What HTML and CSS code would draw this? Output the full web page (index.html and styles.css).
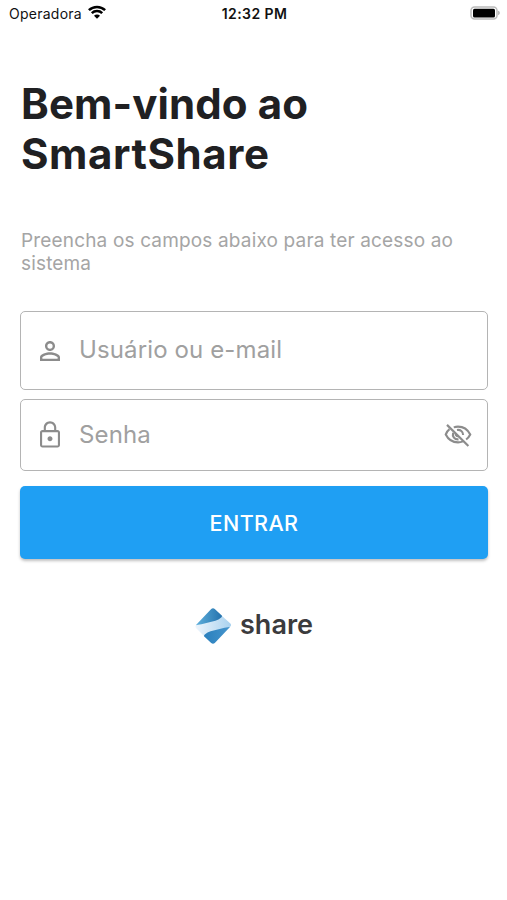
FILE: index.html
```html
<!DOCTYPE html>
<html lang="pt-BR">
<head>
    <meta charset="UTF-8">
    <meta name="viewport" content="width=device-width, initial-scale=1.0">
    <title>SmartShare</title>
    <link rel="stylesheet" href="styles.css">
</head>
<body>
    <header class="status-bar">
        <div class="carrier">
            <span class="carrier-name">Operadora</span>
            <svg class="wifi" viewBox="0 0 18 14">
                <path d="M.9 5.2a11.6 11.6 0 0 1 16.2 0" />
                <path d="M3.8 8.1a7.4 7.4 0 0 1 10.4 0" />
                <path class="wifi-dot" d="M9 13.8 6 10.8a4.2 4.2 0 0 1 6 0z" />
            </svg>
        </div>
        <span class="clock">12:32 PM</span>
        <svg class="battery" viewBox="0 0 30 14">
            <rect class="battery-case" x="1" y="1" width="26" height="12" rx="3.5" />
            <rect x="3" y="2.8" width="22" height="8.6" rx="1.5" />
            <path class="battery-tip" d="M28.2 4.8c2 .6 2 3.8 0 4.4z" />
        </svg>
    </header>

    <main class="login">
        <h1>Bem-vindo ao<br><span class="app-name">SmartShare</span></h1>
        <p class="subtitle">Preencha os campos abaixo para ter acesso ao<br>sistema</p>

        <form class="login-form">
            <label class="field field-user">
                <svg class="icon" viewBox="0 0 24 24">
                    <path d="M12 5.9a2.1 2.1 0 1 1 0 4.2 2.1 2.1 0 0 1 0-4.2m0 9c2.97 0 6.1 1.46 6.1 2.1v1.1H5.9V17c0-.64 3.13-2.1 6.1-2.1M12 4C9.79 4 8 5.79 8 8s1.79 4 4 4 4-1.79 4-4-1.79-4-4-4zm0 9c-2.67 0-8 1.34-8 4v3h16v-3c0-2.66-5.33-4-8-4z" />
                </svg>
                <input type="text" placeholder="Usuário ou e-mail">
            </label>
            <label class="field field-password">
                <svg class="icon" viewBox="0 0 24 24">
                    <path d="M18 8h-1V6c0-2.76-2.24-5-5-5S7 3.24 7 6v2H6c-1.1 0-2 .9-2 2v10c0 1.1.9 2 2 2h12c1.1 0 2-.9 2-2V10c0-1.1-.9-2-2-2zM8.7 6c0-1.8 1.5-3.3 3.3-3.3s3.3 1.5 3.3 3.3v2H8.7V6zM18.3 20.3H5.7V9.7h12.6v10.6zM12 17c1.1 0 2-.9 2-2s-.9-2-2-2-2 .9-2 2 .9 2 2 2z" />
                </svg>
                <input type="password" placeholder="Senha">
                <svg class="icon icon-eye" viewBox="0 0 24 24">
                    <path d="M8.6 5.9C9.7 5.5 10.8 5.3 12 5.3c4.2 0 7.8 2.4 9.8 6.3-.8 1.6-1.9 3-3.3 4" />
                    <path d="M5.2 7.3c-1.3 1-2.3 2.5-3 4.3 2 4 5.6 6.3 9.8 6.3 1.4 0 2.8-.3 4-.8" />
                    <path d="M11.2 8c2.7-.5 4.9 1.4 4.9 4" />
                    <path d="M8.1 10.3c-.9 2.9 1.2 5.5 4.3 5.2" />
                    <path d="M10.3 10.4c-.5 1.2.3 2.6 1.8 2.6" />
                    <path d="M3.2 3.9 20.3 20.8" />
                </svg>
            </label>
            <button type="button" class="btn-enter">ENTRAR</button>
        </form>

        <div class="brand">
            <svg class="brand-logo" viewBox="0 0 36 38">
                <defs>
                    <linearGradient id="top" x1="0" y1="0" x2="1" y2="0">
                        <stop offset="0" stop-color="#5fb0dc" />
                        <stop offset="1" stop-color="#2472ad" />
                    </linearGradient>
                    <linearGradient id="band" x1="0" y1="0" x2="1" y2="0">
                        <stop offset="0" stop-color="#eef5fc" />
                        <stop offset="1" stop-color="#a9d2ef" />
                    </linearGradient>
                    <linearGradient id="bottom" x1="0" y1="0" x2="1" y2="0">
                        <stop offset="0" stop-color="#2b80bd" />
                        <stop offset="1" stop-color="#4595cd" />
                    </linearGradient>
                </defs>
                <path fill="url(#band)" d="M.6 18.6 9 14l17.5-5.5 8.9 8q1.4 1.5 0 3L27 24 9.5 29.5 1 21q-1-1-.4-2.4z" />
                <path fill="url(#top)" d="M.8 18.2 16.2 2q1.8-1.6 3.6 0l7.2 6.8q.4 2.2-6.6 5L6.4 17.2q-3.8.4-5.6 1z" />
                <path fill="url(#bottom)" d="M35.2 19.8 19.8 36q-1.8 1.6-3.6 0L9 29.2q-.4-2.2 6.6-5l14-3.4q3.8-.4 5.6-1z" />
            </svg>
            <span class="brand-name">share</span>
        </div>
    </main>
</body>
</html>
```
FILE: styles.css
```css
* {
    box-sizing: border-box;
    font-family: 'Inter', sans-serif;
}

body {
    margin: 0;
    min-height: 100vh;
    background: #fff;
    color: #202022;
}

/* Status bar */
.status-bar {
    display: grid;
    grid-template-columns: 1fr auto 1fr;
    align-items: center;
    height: 28px;
    padding: 0 7px 1px 9px;
    color: #111;
}

.carrier {
    display: flex;
    align-items: center;
    gap: 6px;
}

.carrier-name {
    font-size: 14px;
    letter-spacing: 0.25px;
}

.wifi {
    width: 18px;
    height: 14px;
    margin-top: -3px;
    fill: none;
    stroke: #000;
    stroke-width: 2.5;
}

.wifi-dot {
    fill: #000;
    stroke: none;
}

.clock {
    font-size: 14px;
    font-weight: 600;
    letter-spacing: 0.4px;
}

.battery {
    justify-self: end;
    width: 30px;
    height: 14px;
    margin-top: -1px;
}

.battery-case {
    fill: #fff;
    stroke: #bbb;
    stroke-width: 1.5;
}

.battery-tip {
    fill: #aaa;
}

/* Login */
.login {
    padding: 51px 19px 0 20px;
}

h1 {
    margin: 0;
    padding-left: 1px;
    font-size: 42px;
    line-height: 50px;
    font-weight: 700;
    letter-spacing: 0.1px;
}

.app-name {
    letter-spacing: 0.6px;
}

.subtitle {
    margin: 50px 0 0;
    padding-left: 1px;
    font-size: 19px;
    line-height: 23px;
    letter-spacing: 0.16px;
    color: #a5a5a5;
}

.login-form {
    display: flex;
    flex-direction: column;
    margin-top: 36px;
}

.field {
    display: flex;
    align-items: center;
    padding: 0 14px;
    border: 1.5px solid #b4b4b4;
    border-radius: 5px;
}

.field-user {
    height: 79px;
}

.field-password {
    height: 72px;
    margin-top: 9px;
}

.field input {
    flex: 1;
    min-width: 0;
    margin-left: 14px;
    padding: 0 0 3px;
    border: none;
    outline: none;
    background: none;
    font-size: 24px;
    letter-spacing: 0.12px;
    color: #202022;
}

.field-password input {
    padding-bottom: 1px;
}

.field input::placeholder {
    color: #a0a0a0;
    opacity: 1;
}

.icon {
    width: 30px;
    height: 30px;
    fill: #8c8c8c;
}

.icon-eye {
    fill: none;
    stroke: #8c8c8c;
    stroke-width: 1.7;
}

.btn-enter {
    height: 73px;
    margin-top: 15px;
    border: none;
    border-radius: 5px;
    background: #1f9ff3;
    box-shadow: 0 2px 3px rgba(0, 0, 0, 0.25);
    color: #fff;
    font-size: 21.5px;
    font-weight: 500;
    letter-spacing: 0.4px;
}

.brand {
    display: flex;
    justify-content: center;
    align-items: center;
    gap: 9px;
    margin-top: 48px;
}

.brand-logo {
    width: 36px;
    height: 38px;
}

.brand-name {
    margin-top: -4px;
    font-size: 27px;
    font-weight: 600;
    color: #3b3b3d;
}
```
